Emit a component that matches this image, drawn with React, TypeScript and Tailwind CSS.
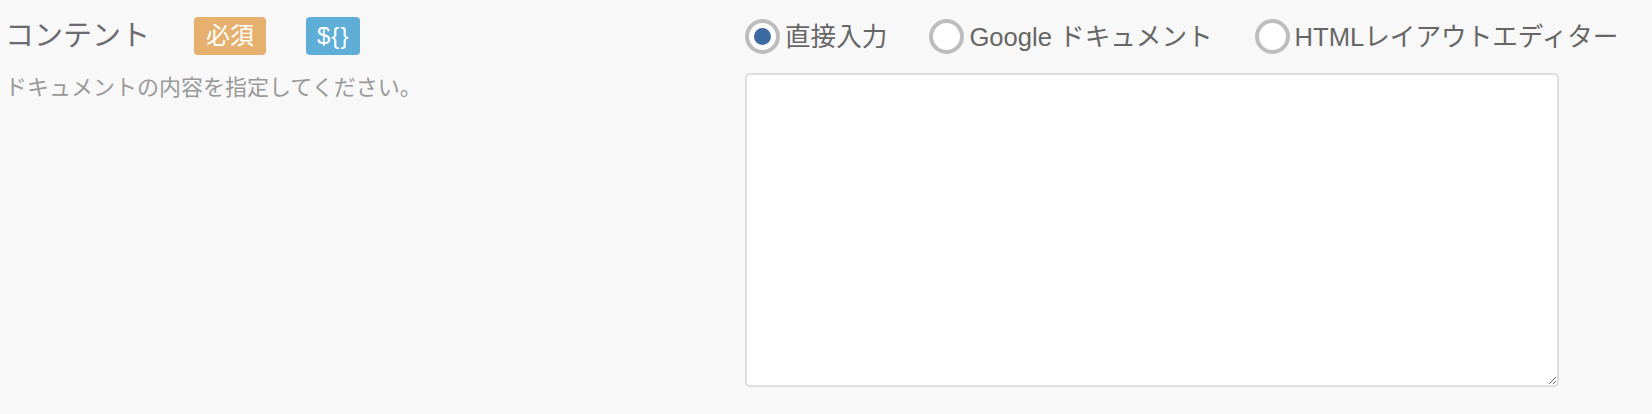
import React, { useState } from 'react';

const FONT = "font-['Liberation_Sans','Noto_Sans_CJK_JP',sans-serif]";

type Option = { value: string; label: string };

const options: Option[] = [
  { value: 'direct', label: '直接入力' },
  { value: 'gdoc', label: 'Google ドキュメント' },
  { value: 'html', label: 'HTMLレイアウトエディター' },
];

const Radio: React.FC<{ checked: boolean; label: string; onClick: () => void }> = ({ checked, label, onClick }) => (
  <label className="flex items-center cursor-pointer mr-[42px] last:mr-0" onClick={onClick}>
    <span className="w-[35px] h-[35px] rounded-full border-[4px] border-[#bdbdbd] bg-white flex items-center justify-center shrink-0">
      {checked && <span className="w-[17px] h-[17px] rounded-full bg-[#3d6aa0]" />}
    </span>
    <span className="ml-[5px] text-[25.6px] leading-[36px] text-[#666] whitespace-nowrap">{label}</span>
  </label>
);

const App: React.FC = () => {
  const [mode, setMode] = useState('direct');

  return (
    <div className={`w-full h-[414px] bg-[#f8f8f8] flex ${FONT}`}>
      {/* ラベル */}
      <div className="w-[745px] shrink-0 pl-[5px] pt-[16px]">
        <div className="flex items-center h-[40px]">
          <span className="text-[29px] leading-[40px] text-[#6b6b70]">コンテント</span>
          <span className="ml-[44px] h-[38px] px-[12px] rounded-[4px] bg-[#e6b06e] text-white text-[24px] leading-[38px]">必須</span>
          <span className="ml-[40px] h-[38px] px-[11px] rounded-[4px] bg-[#5eaed8] text-white text-[24px] leading-[38px] tracking-[1px]">{'${}'}</span>
        </div>
        <p className="mt-[17px] text-[22px] leading-[30px] text-[#999]">ドキュメントの内容を指定してください。</p>
      </div>

      {/* 入力 */}
      <div className="w-[814px] shrink-0 pt-[19px]">
        <div className="flex items-center h-[35px]">
          {options.map((o) => (
            <Radio key={o.value} checked={mode === o.value} label={o.label} onClick={() => setMode(o.value)} />
          ))}
        </div>
        <textarea className="mt-[19px] block w-[814px] h-[314px] bg-white border-2 border-[#dedede] rounded-[5px] outline-none" />
      </div>
    </div>
  );
};

export default App;
